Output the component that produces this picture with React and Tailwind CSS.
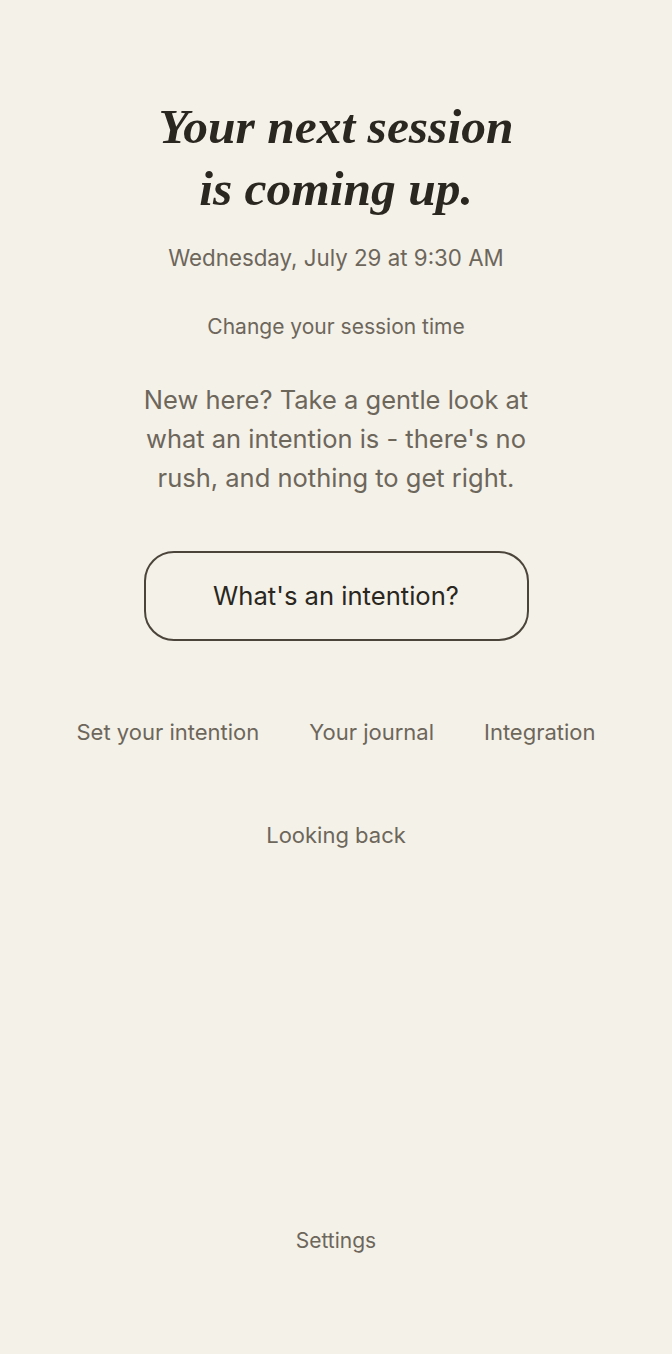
export default function App() {
  return (
    <div
      className="min-h-[1354px] bg-[#f4f1e8] flex flex-col items-center text-center"
      style={{ fontFamily: 'Inter, "Noto Sans", sans-serif' }}
    >
      <h1
        className="mt-[96px] text-[49.5px] leading-[62px] font-bold italic text-[#2a2620]"
        style={{ fontFamily: '"Liberation Serif", "DejaVu Serif", serif' }}
      >
        Your next session
        <br />
        is coming up.
      </h1>
      <p className="mt-[23px] text-[22.3px] leading-[30px] text-[#6d665b]">
        Wednesday, July 29 at 9:30 AM
      </p>
      <button className="mt-[40px] text-[21px] leading-[28px] text-[#6d665b]">
        Change your session time
      </button>
      <p className="mt-[39px] w-[400px] text-[25.5px] leading-[39px] text-[#6d665b]">
        New here? Take a gentle look at what an intention is - there's no rush, and nothing to get right.
      </p>
      <button className="mt-[54px] w-[385px] h-[90px] rounded-[30px] border-2 border-[#4a443b] text-[25.6px] text-[#2a2620]">
        What's an intention?
      </button>
      <nav className="mt-[75px] w-[560px] flex flex-wrap justify-center gap-x-[50px] gap-y-[70px] text-[22px] leading-[33px] text-[#6d665b]">
        <button>Set your intention</button>
        <button>Your journal</button>
        <button>Integration</button>
        <button>Looking back</button>
      </nav>
      <div className="flex-1" />
      <button className="mb-[98px] text-[21px] leading-[30px] text-[#6d665b]">Settings</button>
    </div>
  );
}
